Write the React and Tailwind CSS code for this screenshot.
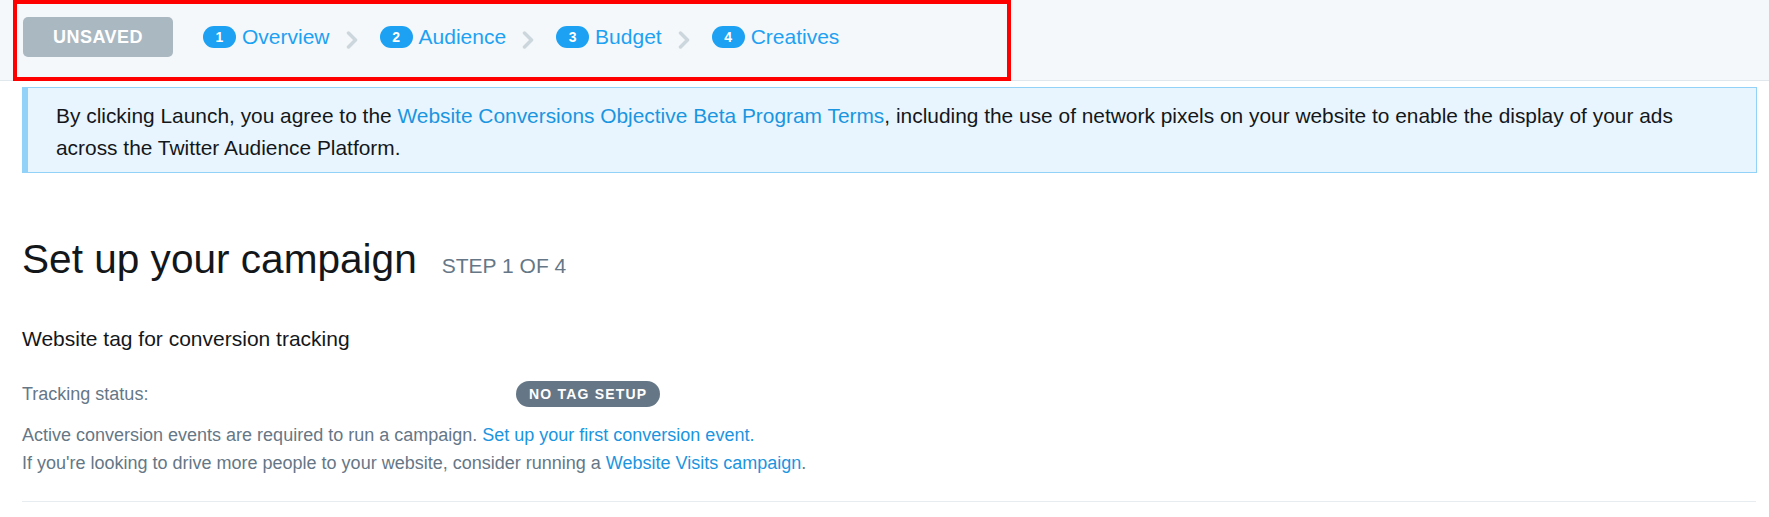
import React from "react"

const steps = [
  { n: 1, label: "Overview" },
  { n: 2, label: "Audience" },
  { n: 3, label: "Budget" },
  { n: 4, label: "Creatives" },
]

function Chevron() {
  return (
    <svg width="12" height="18" viewBox="0 0 12 18" className="mx-[16px] mt-[6px] mr-[22px] shrink-0">
      <polyline points="2.5,2 9.5,9 2.5,16" fill="none" stroke="#ccd6dd" strokeWidth="3.5" strokeLinecap="round" strokeLinejoin="round" />
    </svg>
  )
}

export default function App() {
  return (
    <div className="min-h-screen w-full bg-white font-['Liberation_Sans',Arial,sans-serif] text-[#14171a]">
      {/* header with step nav */}
      <div className="relative h-[81px] bg-[#f5f8fa] border-b border-[#e1e8ed]">
        <div className="flex items-center h-[40px] pt-[17px] box-content pl-[23px]">
          <button
            type="button"
            className="w-[150px] h-[40px] rounded-[5px] bg-[#aab8c2] text-white font-bold text-[18px] tracking-[0.5px] uppercase"
          >
            Unsaved
          </button>
          <div className="flex items-center ml-[30px]">
            {steps.map((s, i) => (
              <div key={s.n} className="flex items-center">
                <span className="flex items-center justify-center w-[33px] h-[22px] rounded-full bg-[#1da1f2] text-white text-[14px] font-bold leading-none">
                  {s.n}
                </span>
                <span className="ml-[6px] text-[21px] leading-[28px] text-[#1da1f2]">{s.label}</span>
                {i < steps.length - 1 && <Chevron />}
              </div>
            ))}
          </div>
        </div>
        <div className="absolute left-[13px] top-0 w-[998px] h-[81px] border-4 border-[#ff0000] pointer-events-none" />
      </div>

      {/* beta terms notice */}
      <div className="ml-[22px] mr-[12px] mt-[6px] h-[86px] border border-l-[6px] border-[#92d1f8] bg-[#e8f5fe] pl-[28px] pr-[28px] pt-[12px] text-[20.9px] leading-[32px] text-[#14171a]">
        By clicking Launch, you agree to the{" "}
        <a className="text-[#1b95e0]">Website Conversions Objective Beta Program Terms</a>, including the use of network
        pixels on your website to enable the display of your ads across the Twitter Audience Platform.
      </div>

      <div className="ml-[22px] mr-[13px]">
        <div className="flex items-baseline mt-[62px]">
          <h1 className="text-[40.6px] leading-[48px] font-normal text-[#14171a]">Set up your campaign</h1>
          <span className="ml-[25px] text-[21px] text-[#657786] uppercase">Step 1 of 4</span>
        </div>

        <div className="mt-[42px] text-[21px] leading-[28px] text-[#14171a]">Website tag for conversion tracking</div>

        <div className="border-b border-[#e6ecf0] pb-[24px]">
          <div className="flex items-center mt-[28px] h-[26px]">
            <div className="w-[494px] text-[18px] leading-[26px] text-[#657786]">Tracking status:</div>
            <span className="flex items-center h-[26px] px-[13px] rounded-full bg-[#657786] text-white text-[14px] font-bold tracking-[1.2px]">
              NO TAG SETUP
            </span>
          </div>
          <div className="mt-[14px] text-[18px] leading-[28px] text-[#657786]">
            <p>
              Active conversion events are required to run a campaign.{" "}
              <a className="text-[#1b95e0]">Set up your first conversion event.</a>
            </p>
            <p>
              If you're looking to drive more people to your website, consider running a{" "}
              <a className="text-[#1b95e0]">Website Visits campaign</a>.
            </p>
          </div>
        </div>
      </div>
    </div>
  )
}
